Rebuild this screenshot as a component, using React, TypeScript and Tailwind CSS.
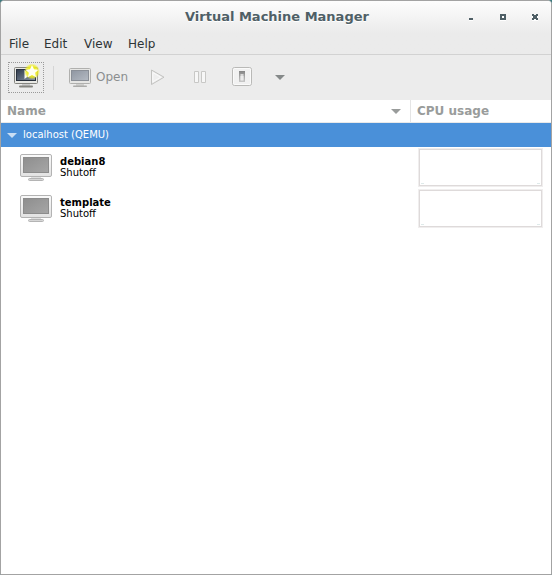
const font = "font-['DejaVu_Sans',sans-serif]";

function ScreenIcon({ id }: { id: string }) {
  return (
    <svg width="24" height="20" viewBox="0 0 24 20">
      <defs>
        <linearGradient id={id} x1="0" y1="0" x2="1" y2="1">
          <stop offset="0" stopColor="#8f96a1" />
          <stop offset="1" stopColor="#b4bac3" />
        </linearGradient>
      </defs>
      <path d="M7 16h8v2H7z" fill="#d0d0ce" />
      <rect x="4" y="17.5" width="14" height="1.5" rx=".7" fill="#acacaa" />
      <rect x=".5" y=".5" width="21" height="15" rx="1" fill="#e6e6e4" stroke="#b0b0ae" />
      <rect x="2.5" y="2.5" width="17" height="10" fill={`url(#${id})`} stroke="#8a8f97" />
    </svg>
  );
}

function NewMachineIcon() {
  return (
    <svg className="overflow-visible" width="26" height="24" viewBox="0 0 26 24">
      <defs>
        <linearGradient id="new-screen" x1="0" y1="0" x2="1" y2="1">
          <stop offset="0" stopColor="#303b4b" />
          <stop offset="1" stopColor="#8793a5" />
        </linearGradient>
        <radialGradient id="glow">
          <stop offset=".5" stopColor="#f0ee20" />
          <stop offset=".75" stopColor="#f0ee20" stopOpacity=".75" />
          <stop offset="1" stopColor="#f0ee20" stopOpacity="0" />
        </radialGradient>
      </defs>
      <path d="M8 17h8v3H8z" fill="#ccc" />
      <rect x="5" y="19.5" width="14" height="2" rx="1" fill="#858580" />
      <rect x=".5" y="1.5" width="23" height="16" rx="1" fill="#e8e8e4" stroke="#858580" />
      <rect x="2.5" y="3.5" width="19" height="11" fill="url(#new-screen)" stroke="#28303d" />
      <path d="M10.5 4v9l6-4.5z" fill="#f8f8f8" />
      <circle cx="18" cy="5.5" r="8" fill="url(#glow)" />
      <path d="M18-1l2 4.2 4.5.5-3.3 3.1.9 4.5L18 9l-4.1 2.3.9-4.5-3.3-3.1 4.5-.5z" fill="#fffff2" />
    </svg>
  );
}

function GuestIcon() {
  return (
    <svg width="32" height="28" viewBox="0 0 32 28">
      <defs>
        <linearGradient id="guest-screen" x1="0" y1="0" x2="1" y2="1">
          <stop offset="0" stopColor="#8e8e8e" />
          <stop offset="1" stopColor="#a6a6a6" />
        </linearGradient>
        <linearGradient id="guest-case" x1="0" y1="0" x2="0" y2="1">
          <stop offset="0" stopColor="#fafafa" />
          <stop offset="1" stopColor="#e2e2e2" />
        </linearGradient>
      </defs>
      <path d="M11 22.5h10v3H11z" fill="#e0e0e0" />
      <rect x="8.5" y="24.5" width="15" height="2" rx="1" fill="#d6d6d6" stroke="#b4b4b4" />
      <rect x=".5" y=".5" width="31" height="22" rx="1.5" fill="url(#guest-case)" stroke="#b3b3b3" />
      <rect x="3.5" y="3.5" width="25" height="15" fill="url(#guest-screen)" stroke="#8c8c8c" />
    </svg>
  );
}

function DownArrow({ color }: { color: string }) {
  return (
    <svg width="10" height="5" viewBox="0 0 10 5">
      <path d="M0 0h10L5 5z" fill={color} />
    </svg>
  );
}

function Guest({ name }: { name: string }) {
  return (
    <div className="flex h-[41px] pl-[19px] pr-[8px]">
      <div className="mt-[7px] h-[28px] w-[40px]"><GuestIcon /></div>
      <div className="flex-1 pt-[9px] text-[10px] leading-[11px] text-black">
        <div className="font-bold">{name}</div>
        <div>Shutoff</div>
      </div>
      <div className="mt-[1px] h-[39px] w-[125px] border border-[#f0eeee]">
        <div className="flex h-full items-end justify-between border border-[#dedada] px-px pb-px">
          <i className="h-px w-[3px] bg-[#dfeaea]" />
          <i className="h-px w-[3px] bg-[#dfeaea]" />
        </div>
      </div>
    </div>
  );
}

export default function App() {
  return (
    <div className="h-[575px] w-[552px] bg-[#3d7b80]">
      <div className={`flex h-full w-full flex-col overflow-hidden rounded-t-[4px] border border-[#a3a3a3] bg-white ${font}`}>
        <div className="h-[54px] shrink-0 border-b border-[#d2d2d2] bg-linear-to-b from-[#fdfdfd] to-[#ebebeb] to-[32px]">
          <header className="flex h-[32px]">
            <h1 className="w-[461px] pl-[184px] pt-[8px] text-[13px] leading-[16px] font-bold whitespace-nowrap text-[#4f5f66] [text-shadow:0_1px_0_white]">Virtual Machine Manager</h1>
            <svg width="88" height="32" viewBox="0 0 88 32" shapeRendering="crispEdges">
              <g fill="white" transform="translate(0 1)">
                <path d="M7 17h4v2H7zM38 13h6v6h-6zM70 13h6v6h-6z" />
              </g>
              <path d="M7 17h4v2H7z" fill="#4f5f66" />
              <rect x="39" y="14" width="4" height="4" fill="white" stroke="#4f5f66" strokeWidth="2" />
              <path d="M70 13h2v1h2v-1h2v2h-1v2h1v2h-2v-1h-2v1h-2v-2h1v-2h-1z" fill="#4f5f66" />
            </svg>
          </header>
          <nav className="flex pl-[8px] pt-[3px] text-[12px] leading-[16px] text-[#2e3436]">
            <span className="w-[35px]">File</span>
            <span className="w-[40px]">Edit</span>
            <span className="w-[44px]">View</span>
            <span>Help</span>
          </nav>
        </div>
        <div className="flex h-[45px] shrink-0 bg-[#ececec] text-[#8b8e8f]">
          <button className="mt-[7px] ml-[7px] flex h-[31px] w-[36px] border border-dotted border-[#999] pt-[3px] pl-[5px]">
            <NewMachineIcon />
          </button>
          <div className="mt-[11px] ml-[9px] h-[24px] w-[16px] border-l border-[#d5d5d5]" />
          <div className="mt-[13px] w-[27px]"><ScreenIcon id="open-screen" /></div>
          <span className="w-[54px] pt-[14px] text-[12px] leading-[16px]">Open</span>
          <svg className="mt-[14px]" width="15" height="18" viewBox="0 0 15 18">
            <path d="M1.5 1v14.5L14 8.2z" fill="#eee" stroke="#c2c2c0" />
            <path d="M2.8 3.6v9.2l8-4.6z" fill="none" stroke="#fafafa" />
          </svg>
          <svg className="mt-[15px] ml-[28px]" width="14" height="15" viewBox="0 0 14 15">
            <path d="M1.5 1.5h4v11h-4zM8.5 1.5h4v11h-4z" fill="#f7f7f7" stroke="#c8c8c6" />
          </svg>
          <svg className="mt-[11px] ml-[24px]" width="21" height="22" viewBox="0 0 21 22">
            <defs>
              <linearGradient id="switch" x1="0" y1="0" x2="0" y2="1">
                <stop offset="0" stopColor="#858585" />
                <stop offset="1" stopColor="#c8c8c8" />
              </linearGradient>
            </defs>
            <rect x="1.5" y="1.5" width="19" height="18" rx="2" fill="#f1f1f1" stroke="#b9b9b7" />
            <rect x="2.5" y="2.5" width="17" height="16" rx="1" fill="none" stroke="#fafafa" />
            <rect x="8" y="5" width="6" height="11" fill="url(#switch)" />
            <path d="M9.5 8h3v7h-3z" fill="#dadada" />
            <path d="M9.5 10h3v4h-3z" fill="#ececec" />
          </svg>
          <div className="mt-[20px] ml-[23px]"><DownArrow color="#858989" /></div>
        </div>
        <div className="flex h-[23px] shrink-0 border-b border-[#e9e9e9] text-[12px] leading-[16px] font-bold text-[#999c9b]">
          <div className="flex w-[410px] justify-between border-r border-[#e5e5e5] pt-[3px] pr-[9px] pl-[6px]">
            <span>Name</span>
            <div className="pt-[6px]"><DownArrow color="#999c9b" /></div>
          </div>
          <span className="pt-[3px] pl-[6px]">CPU usage</span>
        </div>
        <div className="flex h-[24px] shrink-0 bg-[#4a90d9] pl-[6px] text-[10px] leading-[14px] text-white">
          <div className="mt-[10px] mr-[6px]"><DownArrow color="#c9def4" /></div>
          <span className="pt-[5px]">localhost (QEMU)</span>
        </div>
        <Guest name="debian8" />
        <Guest name="template" />
      </div>
    </div>
  );
}
